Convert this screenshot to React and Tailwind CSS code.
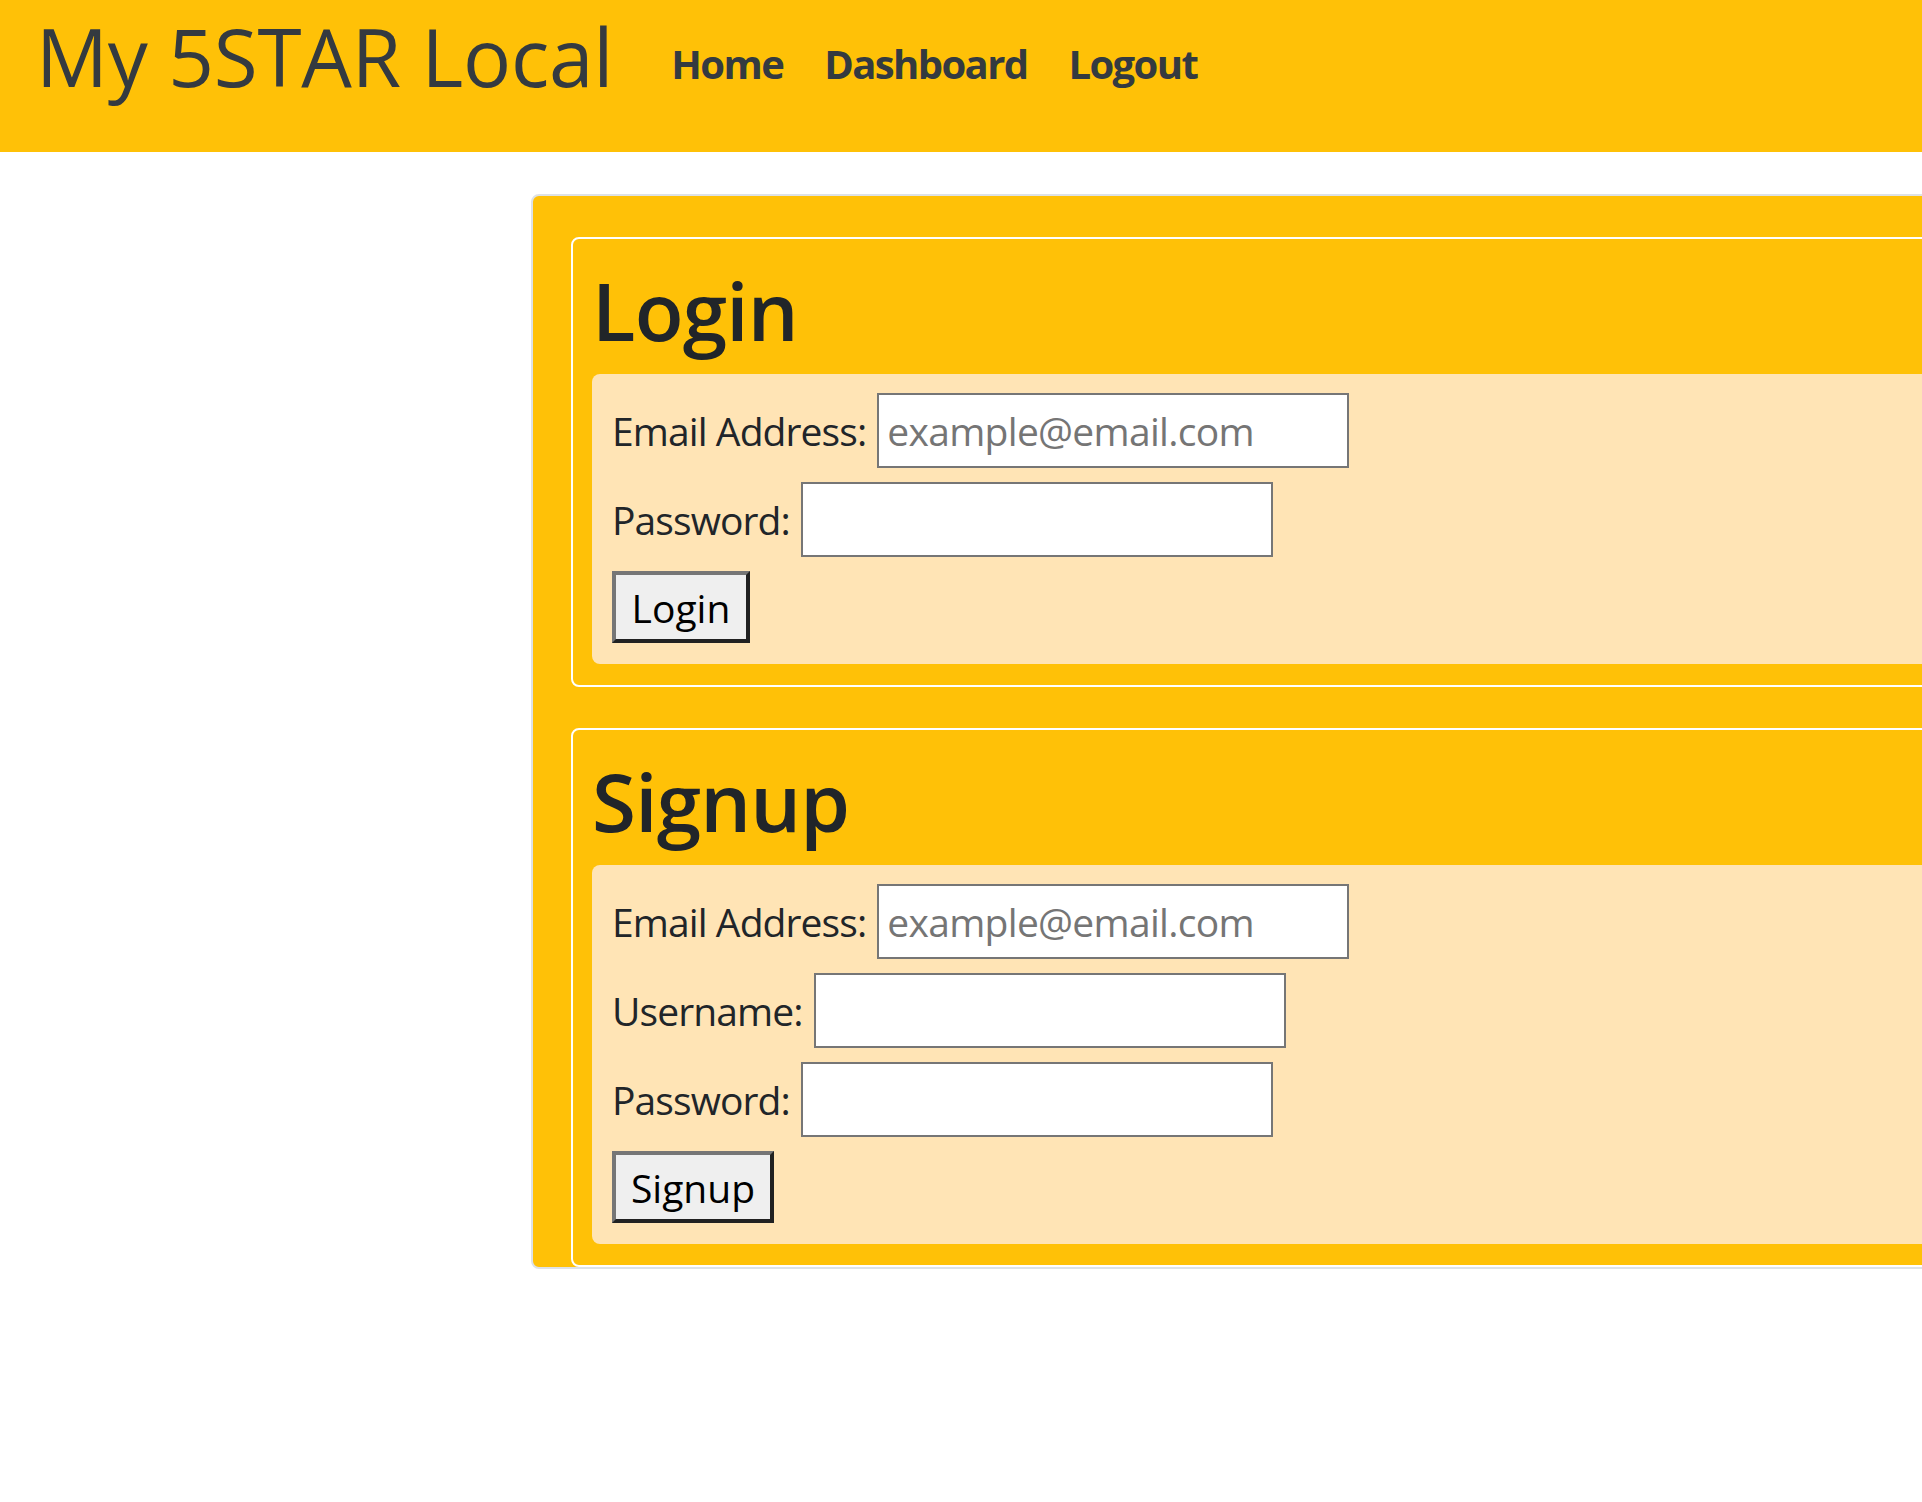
import React from "react";

function Field({ label, placeholder, type = "text" }) {
  return (
    <div className="flex items-center h-[75px]">
      <label className="text-[39px] tracking-[-0.9px] text-[#212529] leading-none whitespace-nowrap">{label}</label>
      <input
        type={type}
        placeholder={placeholder}
        className="ml-[11px] w-[472px] h-[75px] bg-white border-2 border-[#767676] px-[8px] text-[39px] text-[#212529] placeholder:text-[#757575] outline-none tracking-[-0.7px]"
      />
    </div>
  );
}

function Card({ title, children, button, buttonWidth }) {
  return (
    <div className="mt-[41px] border-2 border-white rounded-[8px] pt-[23px] pb-[21px] pl-[19px]">
      <h1 className="text-[80px] leading-[96px] font-semibold text-[#212529] mb-[16px] tracking-[-0.8px]">{title}</h1>
      <div className="bg-[#ffe4b5] rounded-l-[8px] pt-[19px] pb-[21px] pl-[20px] flex flex-col gap-[14px]">
        {children}
        <div>
          <button
            className={`${buttonWidth} h-[72px] bg-[#efefef] border-4 border-t-[#767676] border-l-[#767676] border-b-[#212121] border-r-[#212121] text-[39px] text-black leading-none`}
          >
            {button}
          </button>
        </div>
      </div>
    </div>
  );
}

export default function App() {
  return (
    <div className="w-full min-h-screen bg-white overflow-hidden" style={{ fontFamily: '"Open Sans", "Noto Sans", sans-serif' }}>
      <header className="h-[152px] bg-[#ffc107] flex items-start pl-[36px]">
        <div className="mt-[8px] text-[80px] leading-[96px] text-[#343a40] whitespace-nowrap tracking-[-0.2px]">My 5STAR Local</div>
        <nav className="mt-[40px] ml-[58px] flex gap-[41px] text-[40px] leading-[48px] font-bold text-[#343a40] tracking-[-1.6px]">
          <a>Home</a>
          <a>Dashboard</a>
          <a>Logout</a>
        </nav>
      </header>
      <main className="ml-[531px] mt-[42px] w-[1600px] border-2 border-[#dee2e6] rounded-[8px] bg-[#ffc107] pl-[38px]">
        <Card title="Login" button="Login" buttonWidth="w-[138px]">
          <Field label="Email Address:" placeholder="example@email.com" type="email" />
          <Field label="Password:" type="password" />
        </Card>
        <Card title="Signup" button="Signup" buttonWidth="w-[162px]">
          <Field label="Email Address:" placeholder="example@email.com" type="email" />
          <Field label="Username:" />
          <Field label="Password:" type="password" />
        </Card>
      </main>
    </div>
  );
}
